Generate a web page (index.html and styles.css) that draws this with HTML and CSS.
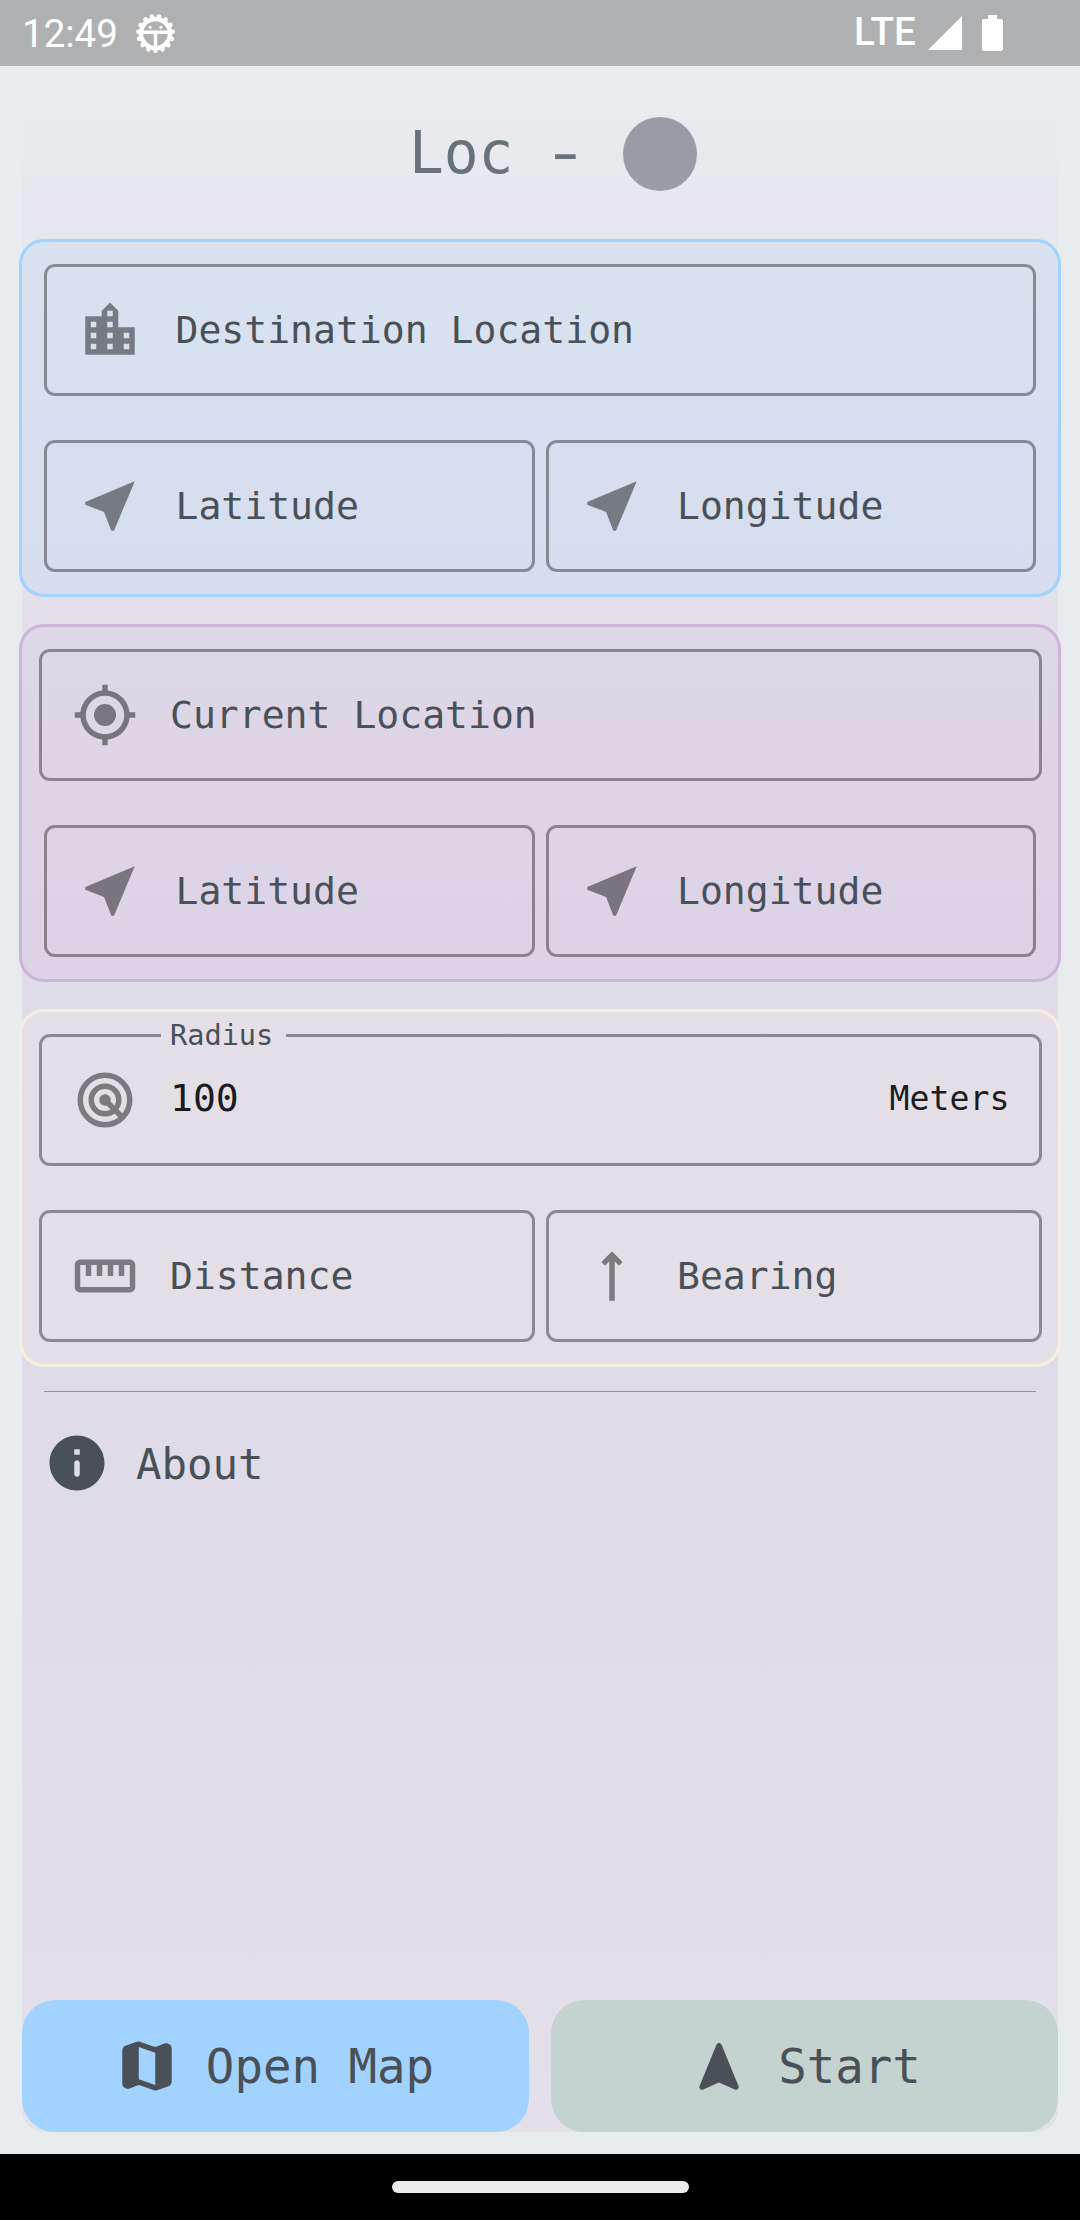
FILE: index.html
```html
<!DOCTYPE html>
<html lang="en">
<head>
<meta charset="utf-8">
<title>Loc</title>
<link rel="stylesheet" href="styles.css">
</head>
<body>
<svg class="sprite" aria-hidden="true">
  <symbol id="near" viewBox="0 0 24 24"><path d="M21 3L3 10.53v.98l6.84 2.65L12.48 21h.98L21 3z"/></symbol>
</svg>

<header class="status">
  <span class="clock">12:49</span>
  <svg class="debug" viewBox="-20 -20 40 40">
    <g fill="none" stroke="#fff">
      <circle r="14.2" stroke-width="4.4"/>
      <circle r="16.9" stroke-width="4.4" stroke-linecap="round" pathLength="30" stroke-dasharray="0.01 1.99" transform="rotate(90)"/>
      <path d="M-13-1.2H13M0-1V14" stroke-width="3.4"/>
    </g>
    <circle cx="-5.2" cy="-6" r="1.5" fill="#fff"/>
    <circle cx="5.2" cy="-6" r="1.5" fill="#fff"/>
  </svg>
  <span class="lte">LTE</span>
  <svg class="signal" viewBox="0 0 34 34"><path d="M34 0V34H0z"/></svg>
  <svg class="battery" viewBox="0 0 21 36"><path d="M6 0h9v4h4a2 2 0 0 1 2 2v28a2 2 0 0 1-2 2H2a2 2 0 0 1-2-2V6a2 2 0 0 1 2-2h4z"/></svg>
</header>

<main class="screen">
  <div class="panel">
    <h1 class="title"><span class="name">Loc</span><span class="dash">-</span><i class="dot"></i></h1>

    <section class="card blue">
      <div class="row">
        <div class="field">
          <svg class="icon" viewBox="0 0 24 24"><path d="M19 15h-2v-2h2zm0 4h-2v-2h2zM13 7h-2V5h2zm0 4h-2V9h2zm0 4h-2v-2h2zm0 4h-2v-2h2zM7 11H5V9h2zm0 4H5v-2h2zm0 4H5v-2h2zm8-8V5l-3-3-3 3v2H3v14h18V11z"/></svg>
          <span>Destination Location</span>
        </div>
      </div>
      <div class="row">
        <div class="field"><svg class="icon"><use href="#near"/></svg><span>Latitude</span></div>
        <div class="field"><svg class="icon"><use href="#near"/></svg><span>Longitude</span></div>
      </div>
    </section>

    <section class="card purple">
      <div class="row wide">
        <div class="field">
          <svg class="icon" viewBox="0 0 24 24"><path d="M12,8A4,4 0 0,1 16,12A4,4 0 0,1 12,16A4,4 0 0,1 8,12A4,4 0 0,1 12,8M3.05,13H1V11H3.05C3.5,6.83 6.83,3.5 11,3.05V1H13V3.05C17.17,3.5 20.5,6.83 20.95,11H23V13H20.95C20.5,17.17 17.17,20.5 13,20.95V23H11V20.95C6.83,20.5 3.5,17.17 3.05,13M12,5A7,7 0 0,0 5,12A7,7 0 0,0 12,19A7,7 0 0,0 19,12A7,7 0 0,0 12,5Z"/></svg>
          <span>Current Location</span>
        </div>
      </div>
      <div class="row">
        <div class="field"><svg class="icon"><use href="#near"/></svg><span>Latitude</span></div>
        <div class="field"><svg class="icon"><use href="#near"/></svg><span>Longitude</span></div>
      </div>
    </section>

    <section class="card cream">
      <div class="row wide">
        <fieldset class="field">
          <legend>Radius</legend>
          <svg class="icon outline" viewBox="0 0 24 24"><circle cx="12" cy="12" r="9"/><circle cx="12" cy="12" r="5"/><path d="M12 12l6.2 6.2"/><circle cx="12" cy="12" r="1.1"/></svg>
          <span class="value">100</span>
          <span class="unit">Meters</span>
        </fieldset>
      </div>
      <div class="row wide">
        <div class="field">
          <svg class="icon" viewBox="0 0 24 24"><path d="M21 6H3c-1.1 0-2 .9-2 2v8c0 1.1.9 2 2 2h18c1.1 0 2-.9 2-2V8c0-1.1-.9-2-2-2zm0 10H3V8h2v4h2V8h2v4h2V8h2v4h2V8h2v4h2V8h2v8z"/></svg>
          <span>Distance</span>
        </div>
        <div class="field">
          <svg class="icon" viewBox="0 0 24 24"><path d="M12 3L8.15 6.9l1.3 1.35L11 6.75V21h2V6.75l1.55 1.5 1.3-1.35z"/></svg>
          <span>Bearing</span>
        </div>
      </div>
    </section>

    <hr class="divider">

    <div class="about">
      <svg class="icon" viewBox="0 0 24 24"><path d="M12 2C6.48 2 2 6.48 2 12s4.48 10 10 10 10-4.48 10-10S17.52 2 12 2zm0 15c-.55 0-1-.45-1-1v-4c0-.55.45-1 1-1s1 .45 1 1v4c0 .55-.45 1-1 1zm1-8h-2V7h2v2z"/></svg>
      <span>About</span>
    </div>

    <div class="actions">
      <button class="btn open">
        <svg class="icon" viewBox="0 0 24 24"><path fill-rule="evenodd" d="M14.65 4.98l-5-1.75c-.42-.15-.88-.15-1.3-.01L4.36 4.56C3.55 4.84 3 5.6 3 6.46v11.85c0 1.41 1.41 2.37 2.72 1.86l2.93-1.14c.22-.09.47-.09.69-.01l5 1.75c.42.15.88.15 1.3.01l3.99-1.34c.81-.27 1.36-1.04 1.36-1.9V5.69c0-1.41-1.41-2.37-2.72-1.86l-2.93 1.14c-.22.08-.46.09-.69.01zM15 18.89l-6-2.11V5.11l6 2.11v11.67z"/></svg>
        <span>Open Map</span>
      </button>
      <button class="btn start">
        <svg class="icon" viewBox="0 0 24 24"><path d="M12.93 4.26l6.15 14.99c.34.83-.51 1.66-1.33 1.29L12 18l-5.74 2.55c-.82.36-1.67-.46-1.33-1.3l6.15-14.99c.33-.83 1.51-.83 1.85 0z"/></svg>
        <span>Start</span>
      </button>
    </div>
  </div>
</main>

<footer class="nav"><div class="pill"></div></footer>
</body>
</html>
```
FILE: styles.css
```css
* { box-sizing: border-box; }

body {
  margin: 0;
  height: 2220px;
  display: flex;
  flex-direction: column;
  background: #e8ecef;
  color: #495057;
  font-family: "DejaVu Sans Mono", monospace;
}

.sprite { display: none; }

/* system status bar */
.status {
  height: 66px;
  padding: 0 77px 0 22px;
  display: flex;
  align-items: center;
  background: #afb0b2;
  color: #fff;
  fill: #fff;
  font: 38.5px/66px Roboto, sans-serif;
}
.clock { width: 113px; padding-top: 2px; }
.debug { width: 41px; height: 41px; }
.lte { margin-left: auto; padding-bottom: 2px; font-weight: 500; font-size: 38.5px; letter-spacing: .2px; }
.signal { width: 34px; height: 34px; margin: 0 20px 0 12px; }
.battery { width: 21px; height: 36px; }

.screen { flex: 1; padding: 22px; display: flex; }
.panel {
  flex: 1;
  display: flex;
  flex-direction: column;
  border-radius: 22px;
  background: linear-gradient(#e9ecef 0, #e7e8ed 110px, #e3e0ea 520px, #dfdbe9 1000px, #e0dbe9 1450px, #e3e0ea 100%);
}

.title {
  height: 132px;
  margin: 0 0 19px;
  padding-left: 387px;
  display: flex;
  align-items: center;
  font-size: 57.8px;
  font-weight: 400;
  color: #69727a;
}
.name, .dash { padding-bottom: 2px; }
.name { width: 139px; }
.dash { width: 35px; margin-right: 40px; transform: scaleX(1.4); }
.dot { width: 74px; height: 74px; border-radius: 50%; background: #999ca4; }

/* grouped inputs */
.card {
  height: 358px;
  margin: 0 -3px 27px;
  padding: 22px;
  display: flex;
  flex-direction: column;
  gap: 44px;
  border: 3px solid;
  border-radius: 25px;
}
.blue { border-color: #a2d2ff; background: rgba(162, 210, 255, .2); }
.purple { border-color: #cdb4db; background: rgba(205, 180, 219, .2); }
.cream { border-color: #f8ede1; background: rgba(250, 240, 224, .2); margin-bottom: 24px; }

.row { display: flex; gap: 11px; height: 132px; }
.wide { margin: 0 -5.5px; }

.field {
  flex: 1;
  min-width: 0;
  height: 132px;
  margin: 0;
  padding: 0 29px 0 30px;
  display: flex;
  align-items: center;
  gap: 32.5px;
  border: 3px solid rgba(0, 0, 0, .38);
  border-radius: 11px;
  font-size: 38.1px;
}
.field span { padding-bottom: 1px; white-space: pre; }
.field .icon { fill: rgba(0, 0, 0, .45); }

.icon { width: 66px; height: 66px; flex: none; fill: #495057; }
.field .outline { fill: none; stroke: #7e797f; stroke-width: 2; }

legend {
  width: 125px;
  margin-left: 89px;
  padding-left: 9.5px;
  font-size: 28.6px;
  line-height: 3px;
}
.field .value { padding: 0 0 5px; color: #1c1b1d; }
.field .unit { margin-left: auto; padding: 0 0 3px; font-size: 33.2px; color: #1c1b1d; }

.divider { width: 992px; height: 1px; margin: 0 auto; border: 0; background: #9391a1; }

.about {
  margin: 38px 22px 0;
  height: 66px;
  display: flex;
  align-items: center;
  gap: 26px;
  font-size: 42.4px;
}
.about span { padding-top: 2px; }

.actions { margin-top: auto; display: grid; grid-template-columns: 1fr 1fr; gap: 22px; }
.btn {
  height: 132px;
  padding: 0;
  display: flex;
  align-items: center;
  justify-content: center;
  gap: 26px;
  border: 0;
  border-radius: 33px;
  color: #495057;
  font: 47.4px "DejaVu Sans Mono", monospace;
}
.open { padding-right: 3px; background: #a2d2ff; }
.start { padding-right: 2px; background: #c4d3d0; }

/* gesture navigation */
.nav { height: 66px; display: flex; align-items: center; justify-content: center; background: #000; }
.pill { width: 297px; height: 12px; border-radius: 6px; background: #ebebeb; }
```
